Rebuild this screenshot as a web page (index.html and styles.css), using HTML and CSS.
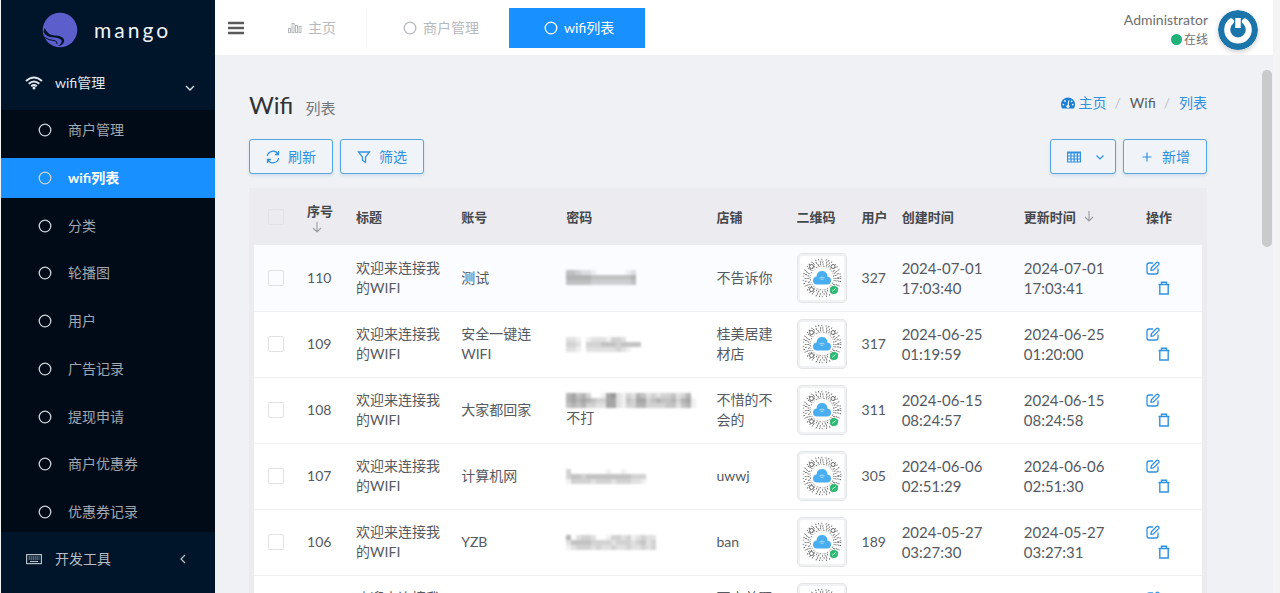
FILE: index.html
```html
<!DOCTYPE html>
<html lang="zh-CN">
<head>
  <meta charset="UTF-8">
  <meta name="viewport" content="width=device-width, initial-scale=1.0">
  <title>Wifi 列表</title>
  <link rel="stylesheet" href="styles.css">
</head>
<body>
  <svg class="defs" aria-hidden="true">
    <symbol id="ring" viewBox="0 0 14 14"><circle cx="7" cy="7" r="5.8" fill="none" stroke="currentColor" stroke-width="1.3"/></symbol>
    <symbol id="edit" viewBox="0 0 14 14">
      <path d="M7 2H3.2Q1 2 1 4.200V11Q1 13 3 13H10Q12 13 12 11V7.500M5 9.300L5.300 6.900L10.500 1.500Q11.500 .7 12.600 1.700Q13.500 2.700 12.700 3.600L7.400 9Z" fill="none" stroke="currentColor" stroke-width="1.300"/>
    </symbol>
    <symbol id="trash" viewBox="0 0 14 14">
      <path d="M1.500 3.500H12.500M4.500 3.500V1.200H9.500V3.500M2.800 3.500V13H11.200V3.500" fill="none" stroke="currentColor" stroke-width="1.400"/>
    </symbol>
    <symbol id="down" viewBox="0 0 10 12"><path d="M5 1V11M1 7L5 11L9 7" fill="none" stroke="currentColor" stroke-width="1.100"/></symbol>
    <symbol id="qr" viewBox="0 0 44 44">
      <g fill="none" stroke="#555">
        <circle cx="22" cy="22" r="11.800" stroke-width=".8" stroke-dasharray="1 1.200 .6 1.700 1.600 1.300"/>
        <circle cx="22" cy="22" r="13.700" stroke-width="2" stroke-dasharray=".7 1.900 .7 3.100 .8 1.700"/>
        <circle cx="22" cy="22" r="16.200" stroke-width="2.200" stroke-dasharray=".7 2 .7 3.300"/>
        <circle cx="22" cy="22" r="18.600" stroke-width="1.500" stroke-dasharray=".8 2.500 .8 3.600 .7 2"/>
      </g>
      <g fill="#fff" stroke="#666">
        <circle cx="11.500" cy="10.500" r="2"/><circle cx="33" cy="10.500" r="2"/><circle cx="11.500" cy="33.500" r="2"/>
      </g>
      <path d="M17 28.500Q13 28.500 13 24.500Q13 21 16.500 20.500Q17 15 22 15Q27 15 27.500 20.500Q31 21 31 24.500Q31 28.500 27 28.500Z" fill="#49aef0"/>
      <path d="M19.500 22Q22 20.300 24.500 22M20.700 23.500Q22 22.800 23.300 23.500" fill="none" stroke="#b9e2fb" stroke-width=".9"/>
      <circle cx="34" cy="34" r="4" fill="#2dbb74"/>
      <path d="M32 35.500L35.800 32.500" stroke="#b5efd0"/>
    </symbol>
  </svg>

  <div class="app">
    <aside class="sidebar">
      <a class="brand" href="#">
        <svg width="36" height="36" viewBox="0 0 36 36">
          <circle cx="18" cy="18" r="17.300" fill="#5b5ecb"/>
          <path d="M1.500 20Q4 25 10 25.200Q18 25.500 19.500 28.500Q20.500 31 16 34L18.500 33.500Q23 31 22 27.500Q20.500 23.800 13 23.500Q6 23.300 2.500 16Z" fill="#00142a"/>
          <path d="M2 25Q7 28.500 12 28.500Q15.500 29 15 32" fill="none" stroke="#00142a"/>
        </svg>
        <span>mango</span>
      </a>
      <a class="nav-parent" href="#">
        <svg width="18" height="14" viewBox="0 0 18 14">
          <path d="M1 5Q9 -2 17 5M3.700 7.700Q9 3.200 14.300 7.700M6.200 10.200Q9 8 11.800 10.200" fill="none" stroke="currentColor" stroke-width="2"/>
          <circle cx="9" cy="12" r="1.500" fill="currentColor"/>
        </svg>
        <span>wifi管理</span>
        <svg class="caret low" width="10" height="10" viewBox="0 0 10 10"><path d="M1 3L5 7L9 3" fill="none" stroke="currentColor" stroke-width="1.300"/></svg>
      </a>
      <ul class="subnav">
        <li><a href="#"><svg width="14" height="14"><use href="#ring"/></svg>商户管理</a></li>
        <li><a class="active" href="#"><svg width="14" height="14"><use href="#ring"/></svg>wifi列表</a></li>
        <li><a href="#"><svg width="14" height="14"><use href="#ring"/></svg>分类</a></li>
        <li><a href="#"><svg width="14" height="14"><use href="#ring"/></svg>轮播图</a></li>
        <li><a href="#"><svg width="14" height="14"><use href="#ring"/></svg>用户</a></li>
        <li><a href="#"><svg width="14" height="14"><use href="#ring"/></svg>广告记录</a></li>
        <li><a href="#"><svg width="14" height="14"><use href="#ring"/></svg>提现申请</a></li>
        <li><a href="#"><svg width="14" height="14"><use href="#ring"/></svg>商户优惠券</a></li>
        <li><a href="#"><svg width="14" height="14"><use href="#ring"/></svg>优惠券记录</a></li>
      </ul>
      <a class="nav-parent tools" href="#">
        <svg width="18" height="14" viewBox="0 0 18 14">
          <rect x="1.600" y="2.600" width="14.800" height="9" fill="none" stroke="currentColor" stroke-width="1.200"/>
          <path d="M3.500 5H14.500M3.500 7H14.500" stroke="currentColor" stroke-width="1.200" stroke-dasharray="1.400 .6"/>
          <path d="M5 9.500H13" stroke="currentColor" stroke-width="1.200"/>
        </svg>
        <span>开发工具</span>
        <svg class="caret" width="10" height="10" viewBox="0 0 10 10"><path d="M6 1L2 5L6 9" fill="none" stroke="currentColor" stroke-width="1.300"/></svg>
      </a>
    </aside>

    <main class="main">
      <header class="topbar">
        <button class="toggle" type="button" aria-label="菜单">
          <svg width="16" height="14" viewBox="0 0 16 14"><path d="M0 2H16M0 7H16M0 12H16" stroke="#5a5a5a" stroke-width="2.500"/></svg>
        </button>
        <nav class="tabs">
          <a class="home" href="#">
            <svg width="14" height="14" viewBox="0 0 14 14" fill="none" stroke="currentColor"><rect x=".5" y="7.500" width="2" height="4"/><rect x="4" y="2.500" width="2" height="9"/><rect x="7.500" y="4.500" width="2" height="7"/><rect x="11" y="5.500" width="2" height="6"/></svg>主页</a>
          <a href="#"><svg width="14" height="14"><use href="#ring"/></svg>商户管理</a>
          <a class="active" href="#"><svg width="14" height="14"><use href="#ring"/></svg>wifi列表</a>
        </nav>
        <div class="user">
          <div class="user-info">
            <div class="user-name">Administrator</div>
            <div class="status"><i></i>在线</div>
          </div>
          <svg class="avatar" width="40" height="40" viewBox="0 0 40 40">
            <circle cx="20" cy="20" r="20" fill="#1b75ab"/>
            <path d="M13 11.500A10.800 10.800 0 1 0 27 11.500" fill="none" stroke="#fff" stroke-width="6" stroke-linecap="round"/>
            <path d="M20 8V18" stroke="#fff" stroke-width="5.500"/>
          </svg>
        </div>
      </header>

      <section class="content">
        <div class="page-head">
          <h1>Wifi <small>列表</small></h1>
          <ol class="breadcrumb">
            <li><a href="#">
              <svg width="14" height="12" viewBox="0 0 14 12"><path d="M1.200 11.500Q0 9.700 0 7.500A7 7 0 0 1 14 7.500Q14 9.700 12.800 11.500Z" fill="#1b7fd6"/><path d="M7 9L7.800 3.500" stroke="#eff1f5" stroke-width="1.200"/><g fill="#eff1f5"><circle cx="7" cy="9.300" r="1.600"/><circle cx="2.400" cy="7.600" r=".9"/><circle cx="4" cy="4" r=".9"/><circle cx="10.600" cy="4.300" r=".9"/><circle cx="11.700" cy="7.600" r=".9"/></g></svg>主页</a></li>
            <li>Wifi</li>
            <li><a href="#">列表</a></li>
          </ol>
        </div>

        <div class="toolbar">
          <button class="btn" type="button">
            <svg width="14" height="14" viewBox="0 0 14 14" fill="none" stroke="currentColor" stroke-width="1.300"><path d="M1.300 6A5.800 5.800 0 0 1 12 4M12.700 8A5.800 5.800 0 0 1 2 10M12.500 1V4.500H9M1.500 13V9.500H5"/></svg>刷新</button>
          <button class="btn" type="button">
            <svg width="14" height="14" viewBox="0 0 14 14" fill="none" stroke="currentColor" stroke-width="1.300"><path d="M1.500 2H12.500L8.500 7.200V12.300L5.500 10.500V7.200Z"/></svg>筛选</button>
          <button class="btn columns" type="button" aria-label="显示列">
            <svg width="14" height="12" viewBox="0 0 14 12" fill="none" stroke="currentColor" stroke-width="1.200"><path d="M.6 1H13.400V11H.6ZM.6 2H13.400M.6 5H13.400M.6 8H13.400M4 1V11M7.200 1V11M10.400 1V11"/></svg>
            <svg width="10" height="10" viewBox="0 0 10 10" fill="none" stroke="currentColor" stroke-width="1.200"><path d="M1.500 3.500L5 7L8.500 3.500"/></svg></button>
          <button class="btn" type="button">
            <svg width="14" height="14" viewBox="0 0 14 14" fill="none" stroke="currentColor" stroke-width="1.200"><path d="M7 2.500V11.500M2.500 7H11.500"/></svg>新增</button>
        </div>

        <div class="table-wrap">
          <table>
            <colgroup>
              <col class="c-check"><col class="c-id"><col class="c-title"><col class="c-title"><col class="c-pass"><col class="c-shop"><col class="c-qr"><col class="c-num"><col class="c-time"><col class="c-time"><col class="c-act">
            </colgroup>
            <thead>
              <tr>
                <th><input type="checkbox" aria-label="全选"></th>
                <th class="sort-cell">序号<svg width="10" height="12"><use href="#down"/></svg></th>
                <th>标题</th>
                <th>账号</th>
                <th>密码</th>
                <th>店铺</th>
                <th>二维码</th>
                <th>用户</th>
                <th>创建时间</th>
                <th class="sort-inline">更新时间<svg width="10" height="12"><use href="#down"/></svg></th>
                <th>操作</th>
              </tr>
            </thead>
            <tbody id="rows"></tbody>
          </table>
        </div>
      </section>
      <div class="scroll-thumb"></div>
    </main>
  </div>

  <script>
    // mask: one string per line of blocks, 0 = empty, 9 = darkest
    var rows = [
      { id: 110, account: '测试', mask: ['44322100000012', '55555444444445', '44444333333334'], rest: '', shop: '不告诉你', users: 327, created: '2024-07-01 17:03:40', updated: '2024-07-01 17:03:41' },
      { id: 109, account: '安全一键连WIFI', mask: ['221012221332000', '332033344434444', '221022222232100'], rest: '', shop: '桂美居建材店', users: 317, created: '2024-06-25 01:19:59', updated: '2024-06-25 01:20:00' },
      { id: 108, account: '大家都回家', mask: ['56453001672132542323342350', '56565433662143663454453561', '45453322662133553333442451'], rest: '不打', shop: '不惜的不会的', users: 311, created: '2024-06-15 08:24:57', updated: '2024-06-15 08:24:58' },
      { id: 107, account: '计算机网', mask: ['3000000010010000', '3443444444444333', '1333323332333221'], rest: '', shop: 'uwwj', users: 305, created: '2024-06-06 02:51:29', updated: '2024-06-06 02:51:30' },
      { id: 106, account: 'YZB', mask: ['502332001332312322', '244443333233323423', '123332322322322323'], rest: '', shop: 'ban', users: 189, created: '2024-05-27 03:27:30', updated: '2024-05-27 03:27:31' },
      { id: 105, account: '', mask: [], rest: '', shop: '万商首聚店', users: '', created: '2024-05-03 10:20:30', updated: '2024-05-03 10:20:31' }
    ];

    function maskSvg(lines) {
      if (!lines.length) return '';
      var w = lines[0].length * 5;
      var out = '<svg class="mask" width="' + w + '" height="15">';
      lines.forEach(function (line, y) {
        line.split('').forEach(function (level, x) {
          out += '<rect x="' + x * 5 + '" y="' + y * 5 + '" width="5" height="5" fill="#444" opacity="' + level * 0.08 + '"/>';
        });
      });
      return out + '</svg>';
    }

    document.getElementById('rows').innerHTML = rows.map(function (r) {
      return '<tr>' +
        '<td><input type="checkbox" aria-label="选择 ' + r.id + '"></td>' +
        '<td>' + r.id + '</td>' +
        '<td>欢迎来连接我的WIFI</td>' +
        '<td>' + r.account + '</td>' +
        '<td>' + maskSvg(r.mask) + (r.rest ? '<div>' + r.rest + '</div>' : '') + '</td>' +
        '<td>' + r.shop + '</td>' +
        '<td><svg class="qr"><use href="#qr"/></svg></td>' +
        '<td>' + r.users + '</td>' +
        '<td class="time">' + r.created + '</td>' +
        '<td class="time">' + r.updated + '</td>' +
        '<td><div class="actions"><a href="#" aria-label="编辑"><svg width="14" height="14"><use href="#edit"/></svg></a>' +
        '<a class="del" href="#" aria-label="删除"><svg width="14" height="14"><use href="#trash"/></svg></a></div></td>' +
        '</tr>';
    }).join('');
  </script>
</body>
</html>
```
FILE: styles.css
```css
* {
  margin: 0;
  padding: 0;
  box-sizing: border-box;
}

body {
  font-family: Lato, "Noto Sans CJK SC", sans-serif;
  font-size: 14px;
  line-height: 20px;
  color: #555a61;
  background-color: #f4f4f5;
}

a {
  color: #2f92e0;
  text-decoration: none;
}

svg {
  flex: none;
}

.defs {
  position: absolute;
  width: 0;
  height: 0;
}

.app {
  display: flex;
  height: 100vh;
  overflow: hidden;
  margin-right: 7px;
  padding-left: 1px;
}

/* sidebar */
.sidebar {
  flex: none;
  width: 214px;
  background-color: #00142a;
}

.brand {
  display: flex;
  align-items: center;
  gap: 16px;
  height: 60px;
  padding-left: 41px;
  font-size: 21px;
  letter-spacing: 3px;
  color: #f0f4f8;
}

.nav-parent {
  display: flex;
  align-items: center;
  gap: 12px;
  height: 50px;
  padding: 0 20px 4px 24px;
  color: #dfe5ea;
}

.nav-parent .caret {
  margin-left: auto;
}

.nav-parent .low {
  margin-top: 10px;
}

.nav-parent.tools {
  height: 54px;
  padding: 0 26px 0 24px;
  color: #b4bdc6;
}

.subnav {
  display: flex;
  flex-direction: column;
  justify-content: space-between;
  height: 422px;
  list-style: none;
  background-color: #000b17;
}

.subnav a {
  display: flex;
  align-items: center;
  gap: 16px;
  height: 40px;
  padding-left: 37px;
  color: #a0a7ae;
}

.subnav svg {
  color: #ccd2d8;
}

.subnav a.active {
  font-weight: bold;
  color: #fff;
  background-color: #1890ff;
}

/* top bar */
.main {
  position: relative;
  flex: 1;
  min-width: 0;
  background-color: #eff1f5;
}

.topbar {
  display: flex;
  align-items: center;
  height: 55px;
  padding: 0 15px 0 13px;
  background-color: #fff;
}

.toggle {
  height: 16px;
  border: none;
  background: none;
}

.toggle svg {
  display: block;
}

.tabs {
  display: flex;
  margin-left: 14px;
}

.tabs a {
  display: flex;
  align-items: center;
  gap: 6px;
  height: 40px;
  padding: 0 30px;
  color: #b6b9bd;
}

.tabs .home {
  margin-right: 6px;
  border-right: 1px solid #f3f3f4;
}

.tabs .active {
  padding: 0 31px 0 35px;
  color: #fff;
  background-color: #1890ff;
}

.user {
  display: flex;
  align-items: center;
  gap: 10px;
  margin-left: auto;
  padding-top: 5px;
  text-align: right;
  color: #6e6e6e;
}

.status {
  font-size: 12px;
}

.status i {
  display: inline-block;
  width: 11px;
  height: 11px;
  margin-right: 2px;
  border-radius: 50%;
  vertical-align: -1px;
  background-color: #21b27a;
}

.avatar {
  border-radius: 50%;
  box-shadow: 0 2px 5px rgba(0, 0, 0, 0.2);
}

/* content */
.content {
  padding: 32px 66px 0 34px;
}

.page-head {
  display: flex;
  justify-content: space-between;
  height: 52px;
}

h1 {
  font-size: 24px;
  font-weight: normal;
  line-height: 36px;
  color: #2f3235;
}

h1 small {
  margin-left: 6px;
  font-size: 15px;
  color: #737679;
}

.breadcrumb {
  display: flex;
  align-items: flex-start;
  padding-top: 6px;
  list-style: none;
}

.breadcrumb a {
  display: flex;
  align-items: center;
  gap: 4px;
}

.breadcrumb li {
  display: flex;
}

.breadcrumb li + li::before {
  content: "/";
  padding: 0 9px 0 8px;
  color: #c0c3c8;
}

.toolbar {
  display: flex;
  gap: 7px;
}

.btn {
  display: flex;
  align-items: center;
  gap: 8px;
  height: 35px;
  padding: 0 16px;
  border: 1px solid #55a5e0;
  border-radius: 3px;
  font: inherit;
  color: #2f92e0;
  background-color: #f0f3f8;
  box-shadow: 0 2px 3px rgba(60, 120, 180, 0.15);
}

.btn.columns {
  gap: 14px;
  padding: 0 10px 0 16px;
  margin-left: auto;
}

/* table */
.table-wrap {
  margin-top: 14px;
  padding: 0 5px;
  background-color: #ececf0;
}

table {
  width: 100%;
  table-layout: fixed;
  border-collapse: collapse;
}

.c-check { width: 47px; }
.c-id { width: 49px; }
.c-title { width: 105px; }
.c-pass { width: 150px; }
.c-shop { width: 80px; }
.c-qr { width: 65px; }
.c-num { width: 40px; }
.c-time { width: 122px; }
.c-act { width: 62px; }

th {
  height: 57px;
  padding-left: 6px;
  font-size: 13px;
  text-align: left;
  white-space: nowrap;
  color: #44474c;
}

th svg {
  color: #9a9da1;
}

.sort-cell svg {
  display: block;
  margin-left: 5px;
}

.sort-inline svg {
  margin-left: 8px;
}

td {
  height: 66px;
  padding: 0 8px 0 6px;
  border-bottom: 1px solid #f0f1f3;
  background-color: #fff;
}

th:first-child,
td:first-child {
  padding-left: 14px;
}

tbody tr:first-child td {
  background-color: #fafcff;
}

.time {
  padding-right: 30px;
  font-size: 15px;
}

input[type="checkbox"] {
  display: block;
  appearance: none;
  width: 16px;
  height: 16px;
  border: 1px solid #e0e2e4;
  border-radius: 2px;
}

.mask {
  display: block;
  filter: blur(1px);
}

.qr {
  display: block;
  width: 50px;
  height: 50px;
  padding: 2px;
  border: 1px solid #e2e4e6;
  border-radius: 5px;
  background-color: #fff;
  box-shadow: inset 0 0 0 2px #f1f2f4;
}

.actions {
  display: flex;
  flex-direction: column;
  gap: 6px;
}

.actions a,
.actions svg {
  display: block;
}

.actions .del {
  margin-left: 11px;
}

/* sits over the right edge of the content */
.scroll-thumb {
  position: absolute;
  top: 70px;
  right: 1px;
  width: 10px;
  height: 177px;
  border-radius: 5px;
  background-color: #c8cacc;
}
```
